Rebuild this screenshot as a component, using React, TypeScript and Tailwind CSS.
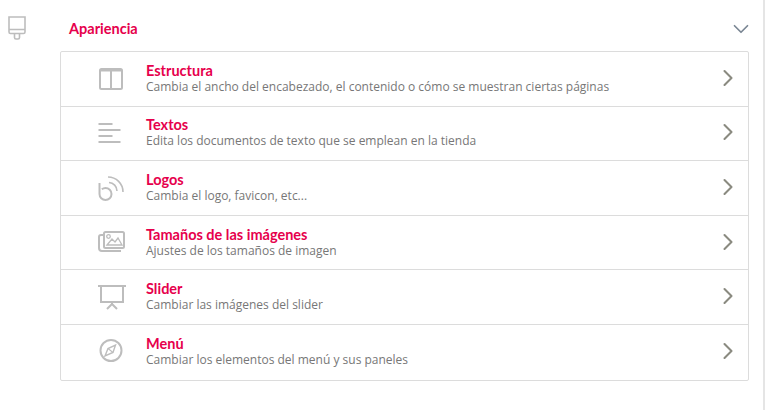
import { ChevronDown, ChevronRight } from "lucide-react";
import type { ReactNode } from "react";

function Icon({ children }: { children: ReactNode }) {
  return (
    <svg width="28" height="28" viewBox="0 0 28 28" fill="none" stroke="#bdbdbd" strokeWidth="2" className="overflow-visible">
      {children}
    </svg>
  );
}

const rows = [
  {
    title: "Estructura",
    desc: "Cambia el ancho del encabezado, el contenido o cómo se muestran ciertas páginas",
    icon: (
      <Icon>
        <rect x="3" y="4" width="22" height="20" rx="1.5" />
        <path d="M14 4v20M3 5.500h22" />
      </Icon>
    ),
  },
  {
    title: "Textos",
    desc: "Edita los documentos de texto que se emplean en la tienda",
    icon: (
      <Icon>
        <path d="M1.500 5h14M1.500 11h22M1.500 17h14M1.500 23h22" />
      </Icon>
    ),
  },
  {
    title: "Logos",
    desc: "Cambia el logo, favicon, etc...",
    icon: (
      <Icon>
        <path d="M2.500 9v11a6 6 0 1 0 6-6c-1.500 0-2.700.5-3.700 1.300" />
        <path d="M12 8.500a8.500 8.500 0 0 1 8 8.500M11 3a15 15 0 0 1 15 15" strokeWidth="1.600" />
      </Icon>
    ),
  },
  {
    title: "Tamaños de las imágenes",
    desc: "Ajustes de los tamaños de imagen",
    icon: (
      <Icon>
        <rect x="7" y="3" width="20" height="16" rx="1.500" />
        <path d="M7 6H4a2 2 0 0 0-2 2v11a3 3 0 0 0 3 3h19" />
        <path d="M10 16l5-6 3 3 3-4 4 7z" strokeWidth="1.300" />
        <circle cx="11.500" cy="7.500" r="1.800" strokeWidth="1.300" />
      </Icon>
    ),
  },
  {
    title: "Slider",
    desc: "Cambiar las imágenes del slider",
    icon: (
      <Icon>
        <path d="M1 3h28M4 3v16h22V3M15 19v3M15 21l-5 5M15 21l5 5" />
      </Icon>
    ),
  },
  {
    title: "Menú",
    desc: "Cambiar los elementos del menú y sus paneles",
    icon: (
      <Icon>
        <circle cx="14" cy="12.500" r="10.500" />
        <path d="M18.500 7L16 14.500l-8 3.500 3-7.500z" strokeWidth="1.400" />
        <path d="M11 10.500l5 4" strokeWidth="1.100" />
      </Icon>
    ),
  },
];

export default function App() {
  return (
    <div className="w-[765px] h-[410px] bg-white overflow-hidden flex font-['Open_Sans',sans-serif] border-r-2 border-[#e5e5e5]">
      {/* brush icon */}
      <div className="w-[60px] shrink-0 pl-2 pt-4">
        <svg width="18" height="24" viewBox="0 0 18 24" fill="none" stroke="#bdbdbd" strokeWidth="1.600">
          <path d="M1 1h16v15a1.500 1.500 0 0 1-1.500 1.500h-13A1.500 1.500 0 0 1 1 16z" />
          <path d="M1 13.500h16M6.500 17.500v4a1.500 1.500 0 0 0 1.500 1.500h2a1.500 1.500 0 0 0 1.500-1.500v-4" />
        </svg>
      </div>

      <div className="w-[689px] shrink-0">
        {/* section header */}
        <div className="h-[51px] flex items-center justify-between pl-[9px] pt-[7px]">
          <div className="text-[14.5px] font-bold font-['Lato',sans-serif] text-[#e6004c]">Apariencia</div>
          <ChevronDown className="size-[26px] text-[#7b8794] mr-[-5px]" strokeWidth={1.600} />
        </div>

        {/* list */}
        <div className="border border-[#dcdcdc] rounded-[2px] divide-y divide-[#dcdcdc]">
          {rows.map((r) => (
            <div key={r.title} className="h-[54.6px] flex items-center">
              <div className="w-[85px] shrink-0 pl-[36px]">{r.icon}</div>
              <div className="flex-1">
                <div className="text-[14.5px] font-bold font-['Lato',sans-serif] leading-[17px] -mt-[1px] text-[#e6004c]">{r.title}</div>
                <div className="text-xs leading-[16px] text-[#777]">{r.desc}</div>
              </div>
              <ChevronRight className="size-[28px] mr-[6px] -mt-[2px] text-[#8a8a80]" strokeWidth={1.800} />
            </div>
          ))}
        </div>
      </div>
    </div>
  );
}
